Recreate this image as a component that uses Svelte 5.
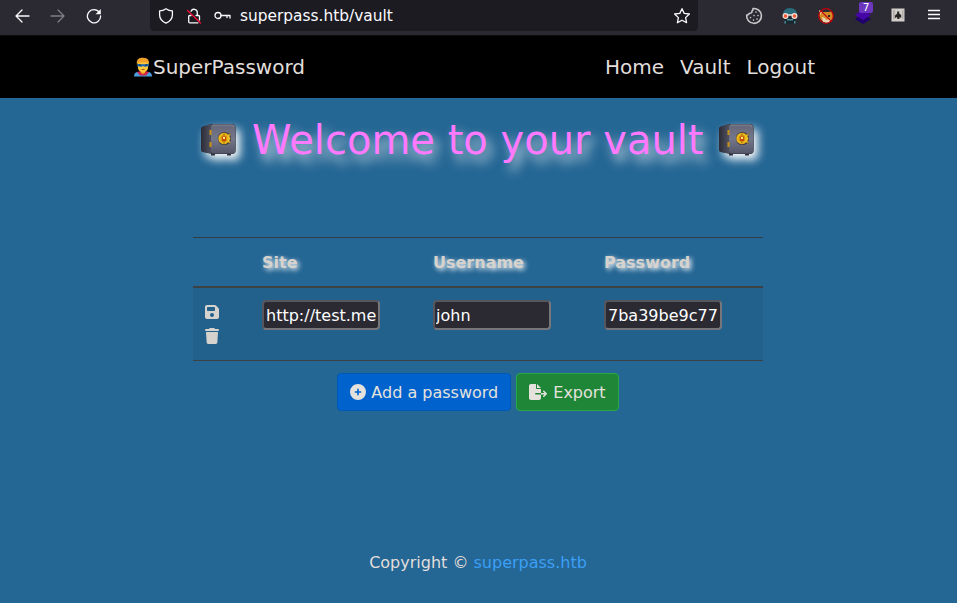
<script>
  let rows = $state([{ site: 'http://test.me', user: 'john', password: '7ba39be9c77' }]);
  const links = ['Home', 'Vault', 'Logout'];
</script>

{#snippet safe()}
  <svg class="safe" width="38" height="34" viewBox="0 0 38 34">
    <defs>
      <linearGradient id="door" x1="0" y1="0" x2="0" y2="1">
        <stop offset="0" stop-color="#666879" />
        <stop offset=".5" stop-color="#74768a" />
        <stop offset="1" stop-color="#555769" />
      </linearGradient>
      <linearGradient id="side" x1="0" y1="0" x2="1" y2="0">
        <stop offset="0" stop-color="#2b2b37" />
        <stop offset="1" stop-color="#505261" />
      </linearGradient>
    </defs>
    <path d="M11 30h4v2.500h-4zM27 30h4v2.500h-4z" fill="#30303e" />
    <path d="M1 6q0-2 2-2.500L11 1h21q3 0 3 3v24q0 3-3 3H12L3 29q-2-.5-2-2.500z" fill="#30313d" />
    <path d="M1 6q0-2 2-2.500L11 1v29.500L3 29q-2-.5-2-2.500z" fill="url(#side)" />
    <rect x="10.500" y="1.500" width="25" height="29" rx="3" fill="url(#door)" stroke="#454653" stroke-width=".7" />
    <path d="M12 3q0-1 1-1h19q2 0 2 2" fill="none" stroke="#9596a4" stroke-width=".7" />
    <path d="M10.500 7v5M10.500 19v5" stroke="#c99112" stroke-width="2" />
    <circle cx="24.400" cy="15.500" r="6.600" fill="#403b43" />
    <circle cx="24" cy="15.500" r="4.600" fill="#d4970f" stroke="#edb81b" stroke-width="2.200" />
    <path d="m27.500 12 3-1.500-1 3 1 2-1 2 1 3-3-1.500" fill="#f0c32a" stroke="#765012" stroke-width=".4" />
    <path d="M24 20.500v-2M24 10.500v2" stroke="#8d5407" stroke-width=".9" />
    <path d="M22 13.500h4v4.500h-4z" fill="#c94b0b" /><path d="M23 14h2v2h-2z" fill="#ffe575" />
  </svg>
{/snippet}

<div class="page">
  <div class="toolbar">
    <div class="navigation">
      <svg width="16" height="16" viewBox="0 0 16 16"><path d="M15 8H2M8 2 2 8l6 6" /></svg>
      <svg class="dim" width="16" height="16" viewBox="0 0 16 16"><path d="M1 8h13M8 2l6 6-6 6" /></svg>
      <svg width="16" height="16" viewBox="0 0 16 16"><path d="M13.400 4.400A6.600 6.600 0 1 0 14.600 8" /><path class="solid" d="M14.800 1v5.200H9.600z" /></svg>
    </div>
    <div class="address">
      <svg width="16" height="16" viewBox="0 0 16 16"><path d="M8 .8c2 1.500 4 2.100 6.400 2.100v4c0 4-2.700 6.500-6.400 8.300-3.700-1.800-6.400-4.300-6.400-8.300v-4C4 2.900 6 2.300 8 .8z" /></svg>
      <svg width="16" height="16" viewBox="0 0 16 16"><path d="M5 3.200a3.300 3.300 0 0 1 6.300 1.300V7.500M10 7.500h2.500q1 0 1 1V12M12 14.800H3.700q-1 0-1-1V8.500q0-1 1-1H5" /><path d="m1.500 2.500 13 12.500" class="slash" /></svg>
      <svg width="17" height="16" viewBox="0 0 17 16"><circle cx="4" cy="7.500" r="3" /><path d="M7 7.500h9V10M13 7.500v2" /></svg>
      <span class="url">superpass.htb/vault</span>
      <svg class="star" width="18" height="18" viewBox="0 0 18 18"><path d="m9 1.700 2.200 4.700 5.200.6-3.800 3.600 1 5.100L9 13.200l-4.600 2.500 1-5.100L1.600 7l5.200-.6z" /></svg>
    </div>
    <div class="extensions">
      <svg class="cookie" width="18" height="18" viewBox="0 0 18 18"><path d="M8 1.600A7.400 7.400 0 1 1 1.700 8Q3.500 8.300 4.500 6.200 7.200 6.400 7 4 8.300 3.300 8 1.600z" /><path d="M11 5v.1M9 8.500v.1M13 8.500v.1M5.500 10.500v.1M12 12v.1M8.500 13v.1" /></svg>
      <svg width="18" height="18" viewBox="0 0 18 18" stroke="none"><path d="M2 8q0-7 7-7t7 7z" fill="#286b7b" /><path d="M3.500 10h11v6.500h-11z" fill="#14282f" /><path d="M6 12h6v1.500H6zM3.500 14H5v2.500H3.500zM13 14h1.500v2.500H13z" fill="#508d98" /><circle cx="4.500" cy="9" r="2.400" fill="#f15a35" stroke="#eee0d8" stroke-width="1.200" /><circle cx="13.500" cy="9" r="2.400" fill="#f15a35" stroke="#eee0d8" stroke-width="1.200" /><path d="M6.500 8h5" stroke="#eee0d8" /></svg>
      <svg width="18" height="18" viewBox="0 0 18 18" stroke="none"><path d="m2 4 4 1h6l4-1v7l-3 4-4 1-5-3-2-5z" fill="#d68a24" /><path d="m2 3 3 2-2 3zM5 10l3 1 1 2 3-1 2 1-3 3-5-1z" fill="#e9d5b3" /><path d="M11 8h2v2h-2zM14 4l2-1v4z" fill="#352721" /><circle cx="9" cy="9" r="7.300" fill="none" stroke="#c1000b" stroke-width="1.200" /><path d="m3.700 3.700 10.600 10.600" stroke="#c1000b" stroke-width="1.200" /></svg>
      <div class="stack">
        <svg width="18" height="18" viewBox="0 0 18 18" stroke="none"><path d="m9 6 8 6-8 5-8-5z" fill="#20006e" /><path d="m9 2 8 6-8 5-8-5z" fill="#4506a5" /></svg>
        <span class="badge">7</span>
      </div>
      <svg width="18" height="18" viewBox="0 0 18 18" stroke="none"><path d="M2.500 1.500h13v13h-13z" fill="#d3cfca" /><path d="M4 3h2v9H4zM13 3h1.500v9H13z" fill="#b6b0aa" /><path d="M8.200 4.500h2v2l2 1.500v3l-1.500-1-.3 2H8.500L8 10l-2 1V8.500l2.200-2z" fill="#252524" /></svg>
      <svg class="menu" width="18" height="18" viewBox="0 0 18 18"><path d="M3 3.500h12M3 7.500h12M3 11.500h12" /></svg>
    </div>
  </div>

  <header>
    <div class="brand">
      <svg width="20" height="20" viewBox="0 0 20 20">
        <path d="M1 19.500q0-4.500 4-4.500h10q4 0 4 4.500z" fill="#4b9fe0" />
        <path d="m4 15 4-1h4l4 1-3 3.500H7z" fill="#cd2447" />
        <path d="M8 12h4v4l-2 1-2-1z" fill="#f3a91f" />
        <path d="M4.800 5h10.400v4q0 6-5.200 6T4.800 9z" fill="#ffca3b" />
        <path d="M4 8Q2.500 1 9 .8q8-.8 7 7.200l-1.300-2.500H5.300z" fill="#f2a22b" />
        <path d="M4.500 6.800q5.500 1 11 0v2.500l-4 .5L10 9l-1.500.8-4-.5z" fill="#1769b8" />
        <path d="M6 8h2M12 8h2" stroke="#142d4a" /><path d="M8.500 12.500h3" stroke="#a35a19" />
      </svg><span>SuperPassword</span>
    </div>
    <nav>{#each links as link}<a href={'#' + link}>{link}</a>{/each}</nav>
  </header>

  <main>
    <h1>{@render safe()}<span>Welcome to your vault</span>{@render safe()}</h1>
    <table>
      <thead><tr><th></th><th>Site</th><th>Username</th><th>Password</th></tr></thead>
      <tbody>
        {#each rows as row}
          <tr>
            <td class="actions">
              <svg width="14" height="16" viewBox="0 0 448 512"><path fill-rule="evenodd" d="M64 32C29 32 0 61 0 96v320c0 35 29 64 64 64h320c35 0 64-29 64-64V173c0-17-7-33-19-45l-77-77c-12-12-28-19-45-19zm0 96c0-18 14-32 32-32h192c18 0 32 14 32 32v64c0 18-14 32-32 32H96c-18 0-32-14-32-32zm160 160a64 64 0 1 1 0 128 64 64 0 1 1 0-128z" /></svg>
              <svg width="14" height="16" viewBox="0 0 448 512"><path d="m135 18-7 14H32a32 32 0 0 0 0 64h384a32 32 0 0 0 0-64h-96l-7-14Q304 0 284 0H164q-20 0-29 18zM416 128H32l21 339c2 25 23 45 48 45h246c25 0 46-20 48-45z" /></svg>
            </td>
            <td><input aria-label="Site" bind:value={row.site} /></td>
            <td><input class="user" aria-label="Username" bind:value={row.user} /></td>
            <td><input aria-label="Password" bind:value={row.password} /></td>
          </tr>
        {/each}
      </tbody>
    </table>
    <div class="buttons">
      <button class="add"><svg width="16" height="16" viewBox="0 0 16 16"><path fill-rule="evenodd" d="M8 0a8 8 0 1 1 0 16A8 8 0 0 1 8 0zM7.200 4.800v2.400H4.800v1.600h2.400v2.400h1.600V8.800h2.400V7.200H8.800V4.800z" /></svg><span>Add a password</span></button>
      <button class="export"><svg width="18" height="16" viewBox="0 0 576 512"><path d="M0 64C0 29 29 0 64 0h160v128c0 18 14 32 32 32h128v128H216a24 24 0 0 0 0 48h168v112c0 35-29 64-64 64H64c-35 0-64-29-64-64zm384 272v-48h110l-39-39a24 24 0 0 1 34-34l80 80q17 17 0 34l-80 80a24 24 0 0 1-34-34l39-39zM384 128H256V0z" /></svg><span>Export</span></button>
    </div>
  </main>
  <footer>Copyright © <a href="#superpass">superpass.htb</a></footer>
</div>

<style>
  :global(body) { margin: 0; background: #246694; }
  * { box-sizing: border-box; }
  .page { height: 603px; display: flex; flex-direction: column; overflow: hidden; background: #246694; color: #e1dedb; font: 16px/24px "DejaVu Sans", sans-serif; }
  svg { display: block; flex: none; }
  .toolbar { height: 36px; flex: none; display: flex; align-items: flex-start; background: #2b2a33; border-bottom: 1px solid #0c0c0d; }
  .toolbar svg { fill: none; stroke: #fbfbfe; stroke-width: 1.3; stroke-linejoin: round; stroke-linecap: round; }
  .toolbar svg[stroke="none"] { stroke: none; }
  .toolbar .cookie { stroke: #c9c8ca; stroke-width: 1.6; }
  .toolbar .menu { stroke-width: 1.3; stroke-linecap: butt; }
  .toolbar .solid { fill: #fbfbfe; stroke: none; }
  .toolbar .dim { opacity: .4; }
  .toolbar .slash { stroke: #f70d3a; }
  .navigation { width: 150px; height: 31px; padding-left: 14px; display: flex; gap: 20px; align-items: center; }
  .address { width: 548px; height: 31px; display: flex; gap: 12px; align-items: center; padding: 0 7px 0 8px; background: #1c1b22; border-radius: 0 0 4px 4px; }
  .url { margin-left: -3px; color: #fbfbfe; font-size: 15.4px; }
  .star { margin-left: auto; }
  .extensions { height: 32px; padding-left: 47px; display: flex; gap: 18px; align-items: center; }
  .stack { position: relative; width: 18px; height: 18px; }
  .stack svg { margin-left: 1px; }
  .badge { position: absolute; left: 6px; top: -5px; width: 14px; height: 11px; background: #6c36be; border-radius: 2px; color: #fff; font-size: 10.5px; line-height: 11px; text-align: center; }
  header { height: 62px; flex: none; padding: 0 142px 0 133px; display: flex; justify-content: space-between; align-items: center; background: #000; font-size: 20px; line-height: 30px; }
  .brand { display: flex; align-items: center; }
  nav { display: flex; gap: 16px; }
  nav a { color: inherit; text-decoration: none; }
  main { width: 956px; display: flex; flex-direction: column; align-items: center; }
  h1 { width: 570px; margin: 18px 0 73px; height: 48px; display: flex; justify-content: flex-start; align-items: center; gap: 14px; padding-left: 7px; font-size: 40px; line-height: 48px; font-weight: 400; color: #ff79ff; text-shadow: 5px 7px 12px rgba(255, 255, 255, .85); white-space: nowrap; }
  .safe { overflow: visible; filter: drop-shadow(4px 5px 5px #fff); }
  table { width: 570px; table-layout: fixed; border-collapse: separate; border-spacing: 0; }
  th { height: 51px; padding: 13px 12px 11px; border-top: 1px solid #333c42; border-bottom: 2px solid #3c4144; text-align: left; color: #d6d3ce; text-shadow: 2px 2px 5px #fff; }
  th:first-child { width: 57px; }
  td { height: 73px; padding: 12px; vertical-align: top; background: #23618d; border-bottom: 1px solid #3c4144; }
  .actions svg { fill: #d6d3ce; margin: 4px 0 8px; }
  .actions svg:last-child { margin-bottom: 4px; }
  input { display: block; width: 118px; height: 30px; padding: 1px 2px; background: #2b2a33; color: #fff; border: 2px solid; border-color: #56565e #77777b #77777b #56565e; border-radius: 4px; font: inherit; }
  .user { padding-left: 1px; }
  .buttons { margin-top: 12px; display: flex; gap: 5px; }
  button { height: 38px; padding: 0 12px; display: flex; align-items: center; gap: 5px; color: #e5e2de; border: 1px solid #0057b8; border-radius: 4px; background: #0062cc; font: inherit; white-space: nowrap; }
  button svg { fill: currentColor; }
  button span { padding-top: 2px; }
  .export { background: #208637; border-color: #28a745; gap: 6px; }
  footer { width: 956px; margin-top: auto; padding-bottom: 28px; text-align: center; }
  footer a { color: #3c9ff4; text-decoration: none; }
</style>
